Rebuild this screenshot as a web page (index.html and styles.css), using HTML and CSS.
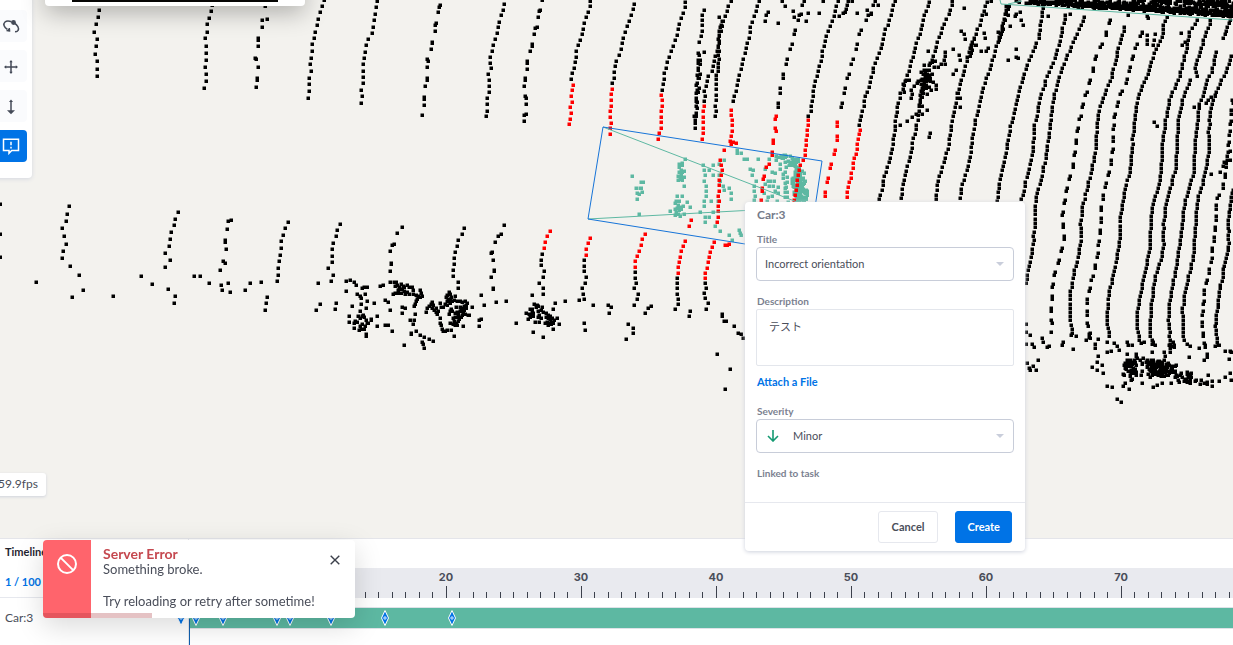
FILE: index.html
```html
<!DOCTYPE html>
<html lang="en">
<head>
<meta charset="utf-8">
<title>Point cloud review</title>
<link rel="stylesheet" href="styles.css">
</head>
<body class="app">
<main class="stage">
  <svg class="cloud" aria-hidden="true">
    <path id="cloud-black" class="cloud-black"/>
    <path id="cloud-teal" class="cloud-teal"/>
    <path id="cloud-red" class="cloud-red"/>
    <path class="edge-teal" d="M603 127L810 207M588 219L810 207M1000 0L1001 4L1240 20.500M1008 4L1022 1"/>
    <path class="edge-blue" d="M603 127L822 161L808 254L588 219Z"/>
  </svg>

  <nav class="tools" aria-label="Tools">
    <button class="tool" type="button" aria-label="Rotate"><svg class="tool-icon" viewBox="0 0 18 18"><path class="line" d="M5.500 12.500C2 10.500 .8 7 3 5c1.600-1.500 4-1.300 6.500-.3M12 6c3.500 2 5.500 5 4 7.500-.5.900-1.400 1.300-3 1.100M4.500 13.500l3 .3-.2-2.800"/><circle class="solid" cx="11.500" cy="5.500" r="2.400"/><circle class="solid" cx="7" cy="13" r="1.200"/></svg></button>
    <button class="tool" type="button" aria-label="Move"><svg class="tool-icon" viewBox="0 0 18 18"><path class="line" d="M9 4v12M3 10h12"/><path class="solid" d="M9 3l1.700 2.200H7.300zM9 17l1.700-2.200H7.300zM2 10l2.200-1.700v3.400zM16 10l-2.200-1.700v3.400z"/></svg></button>
    <button class="tool" type="button" aria-label="Move vertically"><svg class="tool-icon" viewBox="0 0 18 18"><path class="line" d="M9 4v10"/><path class="solid" d="M9 2.500l2 2.600H7zM9 17.300l-4-4h8z"/></svg></button>
    <button class="tool tool-active" type="button" aria-label="Add issue"><svg class="tool-icon" viewBox="0 0 18 18"><path class="line" d="M1.500 2.200h15v11.300H9.700L7 16.300v-2.800H1.500z"/><path class="line" d="M9 4.800v3.400M9 9.800v1.600"/></svg></button>
  </nav>

  <div class="camera"><div class="camera-image"></div></div>

  <output class="fps">59.9fps</output>

  <form class="issue">
    <div class="issue-body">
      <h2 class="issue-name">Car:3</h2>
      <label class="label" for="title">Title</label>
      <div class="pick">
        <select class="select" id="title"><option>Incorrect orientation</option></select>
        <span class="caret"></span>
      </div>
      <label class="label label-next" for="description">Description</label>
      <textarea class="description" id="description">テスト</textarea>
      <a class="attach" href="#attach">Attach a File</a>
      <label class="label label-next" for="severity">Severity</label>
      <div class="pick">
        <svg class="severity-icon" viewBox="0 0 12 12"><path d="M6 0v11M1 6l5 5 5-5"/></svg>
        <select class="select select-icon" id="severity"><option>Minor</option></select>
        <span class="caret"></span>
      </div>
      <p class="label label-next">Linked to task</p>
    </div>
    <div class="issue-actions">
      <button class="button button-plain" type="button">Cancel</button>
      <button class="button button-main" type="button">Create</button>
    </div>
  </form>
</main>

<section class="timeline">
  <div class="side">
    <h2 class="side-title">Timeline</h2>
    <p class="side-frame">1 / 100</p>
    <p class="side-object">Car:3</p>
  </div>
  <div class="lanes">
    <div class="ruler"><div id="labels" class="ruler-labels"></div><svg class="ruler-ticks" aria-hidden="true"><path id="ticks"/></svg></div>
    <div class="lane"><svg id="keys" class="keys" aria-hidden="true"></svg></div>
    <div class="cursor"></div>
  </div>
</section>

<aside class="toast" role="alert">
  <div class="toast-mark"><svg class="toast-icon" viewBox="0 0 20 20"><circle cx="10" cy="10" r="9"/><path d="M3.600 3.600l12.800 12.800"/></svg></div>
  <div class="toast-text">
    <h2 class="toast-title">Server Error</h2>
    <p>Something broke.</p>
    <p class="toast-hint">Try reloading or retry after sometime!</p>
  </div>
  <button class="toast-close" type="button" aria-label="Close"><svg class="toast-x" viewBox="0 0 10 10"><path d="M.7.7l8.600 8.600M9.300.7L.7 9.300"/></svg></button>
  <div class="toast-progress"></div>
</aside>
<script src="app.js"></script>
</body>
</html>
```
FILE: styles.css
```css
* { box-sizing: border-box; }
.app {
  margin: 0;
  height: 100vh;
  display: flex;
  flex-direction: column;
  overflow: hidden;
  background: #fff;
  color: #4a4e5a;
  font: 12px/16px Lato, "Noto Sans CJK JP", sans-serif;
}
h2, p { margin: 0; font-size: inherit; }
button, select, textarea { font: inherit; color: inherit; }

.stage { position: relative; flex: 1; min-height: 0; background: #f3f2ee; }
.cloud { position: absolute; inset: 0; width: 100%; height: 100%; }
.cloud-black { fill: #000; }
.cloud-red { fill: #f00; }
.cloud-teal { fill: #5db8a2; }
.edge-teal { fill: none; stroke: #5db8a2; }
.edge-blue { fill: none; stroke: #1674d8; }

.tools {
  position: absolute;
  top: -35px;
  left: -10px;
  display: flex;
  flex-direction: column;
  gap: 8px;
  padding: 45px 5px 16px;
  background: #fff;
  border-radius: 4px;
  box-shadow: 0 1px 4px #d4d7e0;
}
.tool {
  width: 32px;
  height: 32px;
  padding: 0;
  display: grid;
  place-items: center;
  border: 0;
  border-radius: 4px;
  background: #fafbfd;
  color: #444a57;
}
.tool-active { background: #0073e6; color: #fff; }
.tool-icon { width: 18px; height: 18px; }
.line { fill: none; stroke: currentColor; stroke-width: 1.5; }
.solid { fill: currentColor; }

.camera {
  position: absolute;
  top: -20px;
  left: 45px;
  width: 260px;
  padding: 0 27px 4px;
  background: #fff;
  border-radius: 4px;
  box-shadow: 0 6px 24px #0000004d;
}
.camera-image { height: 22px; background: #070605; }

.fps {
  position: absolute;
  left: -10px;
  bottom: 42px;
  padding: 3px 8px 4px;
  background: #fff;
  border-radius: 3px;
  box-shadow: 0 1px 3px #d0d3dc;
}

.issue {
  position: absolute;
  z-index: 2;
  top: 202px;
  left: 745px;
  width: 280px;
  background: #fff;
  border-radius: 4px;
  box-shadow: 0 1px 4px #cdd1dc;
}
.issue-body { display: flex; flex-direction: column; padding: 5px 11px 21px; }
.issue-name { margin-bottom: 9px; padding-left: 1px; color: #747b8a; font-weight: 700; }
.label { padding: 0 0 1px 1px; font-size: 10px; line-height: 14px; font-weight: 700; color: #7b8190; }
.label-next { margin-top: 13px; }
.pick { position: relative; display: flex; }
.select {
  flex: 1;
  height: 34px;
  padding: 0 8px;
  appearance: none;
  background: #fff;
  border: 1px solid #c8cdd9;
  border-radius: 4px;
  font-size: 11px;
}
.select-icon { padding-left: 36px; }
.caret {
  position: absolute;
  right: 10px;
  top: 15px;
  border: 4px solid transparent;
  border-top-color: #c9cedb;
  border-bottom: 0;
}
.severity-icon {
  position: absolute;
  top: 11px;
  left: 11px;
  width: 12px;
  height: 12px;
  fill: none;
  stroke: #159a72;
  stroke-width: 1.6;
}
.description {
  height: 57px;
  padding: 9px 12px;
  resize: none;
  border: 1px solid #e3e6ec;
  border-radius: 2px;
  font-size: 11px;
}
.attach { align-self: start; margin-top: 8px; padding: 0 0 1px 1px; color: #0073e6; font-size: 11px; font-weight: 700; text-decoration: none; }
.issue-actions {
  display: flex;
  justify-content: flex-end;
  gap: 17px;
  padding: 8px 13px;
  border-top: 1px solid #e6e8ee;
}
.button { height: 32px; padding: 0 13px; border: 1px solid #e6e8ee; border-radius: 3px; background: #fff; font-size: 11px; font-weight: 700; }
.button-main { padding: 0 11px; background: #0073e6; border-color: #0073e6; color: #fff; }

.timeline { display: flex; height: 107px; border-top: 1px solid #e4e5ea; }
.side { width: 189px; border-right: 1px solid #e6e8ee; font-weight: 700; font-size: 11px; }
.side-title { padding: 5px 5px 8px; color: #1f2430; }
.side-frame { padding: 6px 5px 7px; color: #0073e6; border-bottom: 1px solid #e6e8ee; }
.side-object { padding: 12px 5px; font-size: 12px; font-weight: 400; }
.lanes { position: relative; flex: 1; min-width: 0; padding-top: 29px; }
.ruler { position: relative; height: 30px; background: #e9eaef; overflow: hidden; }
.ruler-labels { color: #4a4e5a; font: 700 11px/18px Inter, sans-serif; }
.ruler-label { position: absolute; top: 0; width: 40px; margin-left: -20px; text-align: center; }
.ruler-ticks { position: absolute; inset: 0; width: 100%; height: 100%; stroke: #3c404b; }
.lane { margin-top: 9px; height: 22px; background: #5db8a2; border: solid #dfe2e8; border-width: 1px 0; }
.keys { display: block; margin-left: -20px; width: calc(100% + 20px); height: 20px; overflow: visible; }
.key-outer { fill: #0073e6; stroke: #fff; }
.key-inner { fill: none; stroke: #cfe6ff; }
.cursor { position: absolute; top: 80px; bottom: 0; left: 0; width: 1px; background: #0f5fae; }

.toast {
  position: fixed;
  z-index: 3;
  left: 43px;
  bottom: 27px;
  width: 312px;
  display: flex;
  background: #fff;
  border-radius: 4px;
  overflow: hidden;
  box-shadow: 0 8px 28px #00000026;
}
.toast-mark { width: 48px; padding-top: 14px; display: flex; justify-content: center; background: #ff646c; }
.toast-icon { width: 20px; height: 20px; fill: none; stroke: #fff; stroke-width: 2; }
.toast-text { flex: 1; padding: 6px 0 9px 12px; font-size: 13px; line-height: 16px; white-space: nowrap; }
.toast-title { line-height: 15px; font-size: 14px; color: #c5484f; }
.toast-hint { margin-top: 16px; }
.toast-close { position: absolute; top: 10px; right: 10px; width: 20px; height: 20px; display: grid; place-items: center; padding: 0; border: 0; background: none; }
.toast-x { width: 10px; height: 10px; stroke: #3c404b; stroke-width: 1.4; }
.toast-progress { position: absolute; left: 0; bottom: 0; width: 35%; height: 5px; background: #a9343a4d; }
```
FILE: app.js
```js
const marks = { black: [], red: [], teal: [] };

function dot(color, x, y) {
  marks[color].push("M" + (Math.round(x - 1.5) - .5) + " " + (Math.round(y - 1.5) - .5) + "h3.5v3.5h-3.5z");
}

let seed = 7;
function random() {
  seed = (seed * 16807) % 2147483647;
  return seed / 2147483647;
}

// Dots spaced evenly by y along a scan line; paired lines put two dots close together.
function scan(color, step, text, paired) {
  const pts = text.split(" ").map(p => p.split(",").map(Number));
  let y = pts[0][1];
  let index = 0;
  for (let i = 0; i < pts.length - 1; i++) {
    const [x0, y0] = pts[i];
    const [x1, y1] = pts[i + 1];
    while (y <= y1) {
      dot(color, x0 + (x1 - x0) * (y - y0) / (y1 - y0) + (random() - .5), y);
      y += paired ? (index % 2 ? step * 1.35 : step * .65) : step;
      index++;
    }
  }
}

// Single dots, in thirds of a pixel from an origin.
function dots(color, ox, oy, text) {
  text.trim().split(/\s+/).forEach(p => {
    const [x, y] = p.split(",").map(Number);
    dot(color, ox + x / 3, oy + y / 3);
  });
}

function cluster(color, cx, cy, rx, ry, count) {
  for (let i = 0; i < count; i++) {
    const a = random() * 6.283;
    const r = Math.sqrt(random());
    dot(color, cx + Math.cos(a) * rx * r, cy + Math.sin(a) * ry * r);
  }
}

// Upper scan lines
dots("black", 0, 0, "299,31 296,53 289,73 284,96 292,118 289,140 285,163 291,185 292,207 292,229 638,17 635,35 629,54 623,74 622,96 616,116 620,138 618,159 618,180 617,201 618,222 619,243 612,264 797,20 801,57 788,60 786,81 776,115 776,120 774,140 767,174 769,178 774,201 771,236 771,241 769,261");
dots("black", 300, 0, "73,2 67,18 60,38 56,57 52,76 46,96 42,115 38,134 36,155 34,174 32,194 33,214 28,234 28,254 29,274 24,294 231,3 228,23 227,42 222,62 219,81 216,100 204,118 200,137 197,156 194,174 191,194 191,213 190,232 189,251 184,270 187,290 183,309 420,17 419,21 414,38 408,71 407,75 405,93 398,126 396,130 393,148 383,179 384,184 381,202 381,236 381,241 377,259 374,292 374,297 374,315 367,346");
dots("black", 300, 0, "613,14 609,31 603,47 599,66 596,83 592,101 587,118 580,136 577,153 572,171 572,189 573,206 564,223 569,242 567,260 568,278 563,296 563,314 562,333 560,349 726,2 720,30 718,35 714,53 713,82 706,86 704,104 697,133 697,138 691,155 682,184 682,189 681,207 677,236 677,241 674,259 676,289 678,294 679,312 680,342 674,347 674,365");
scan("black", 5.6, "591,1 590,7 587,18 584,24 583,35 580,40 577,51 574,68 572,79 572,81");
scan("red", 5.7, "573,85 572,90 572,102 570,107 571,113 570,126");
scan("black", 5.7, "634,4 632,13 629,24 624,36 621,52 616,63 614,79 612,86");
scan("red", 5.7, "612,89 611,100 611,124 610,136");
scan("black", 5.5, "686,2 684,13 679,25 677,34 672,51 668,62 665,72 664,80 662,92");
scan("red", 5.5, "661,95 663,101 661,112 661,128 658,140");
dots("black", 560, 0, "432,30 426,45 428,62 427,77 426,94 424,110 419,127 432,156 479,51 487,65 484,76");
scan("black", 3.8, "699,53 698,75 697,90 697,110 695,131", true);
scan("black", 7, "701,60 700,70 699,90 695,115 697,125", true);
scan("black", 4, "721,27 719,40 719,60 717,78");
scan("black", 5.4, "717,79 716,90 716,118");
scan("black", 5, "731,1 729,5 727,12 724,20 720,35 716,55 713,70 709,75 706,85 704,102");
scan("red", 5.6, "704,106 703,117 704,128 702,138 701,144");
scan("black", 5.3, "760,1 756,12 751,27 748,44 744,58 740,73 736,89 733,106");
scan("red", 5.3, "732,110 732,130 731,140 730,146");
dots("red", 560, 0, "519,427 528,431 515,433 494,450");
scan("red", 5.2, "721,160 722,171 719,185 719,205 718,227");
scan("black", 7.3, "804,1 800,15 796,28 794,37 790,52 785,67 782,82 779,100 777,113", true);
scan("red", 6, "776,116 775,125 777,131 774,140 773,152 771,160 766,170 763,185 762,200", true);
scan("black", 5, "838,1 835,12 830,28 825,42 821,63 817,77 813,95 811,110 809,117");
scan("red", 5, "809,120 807,140 805,157 801,163 798,175 795,200");
scan("black", 7.3, "876,1 870,14 863,25 858,40 855,55 850,68 847,83 843,95 840,117", true);
scan("red", 7, "838,122 837,140 835,152 831,166 827,185 825,201", true);
scan("black", 4.8, "895,1 891,17 885,32 881,50 875,65 871,80 866,98 862,115 860,128");
scan("red", 4.8, "860,130 858,146 853,168 848,190 847,201");
scan("black", 4.6, "929,2 925,15 920,35 915,50 910,70 904,85 898,105 896,120 895,133 892,152 888,168 883,184 880,202");
scan("black", 4.6, "953,1 949,14 942,32 937,45 933,60 928,68 925,80 921,100 918,118 915,135 911,155 907,170 903,190 902,202");
scan("black", 4.6, "987,2 985,10 981,22 975,38 970,52 966,65 962,80 958,95 955,110 952,125 949,145 945,160 940,175 938,185 936,202");
scan("black", 4.6, "1006,10 1003,25 999,40 993,60 988,75 983,90 980,105 975,125 972,145 969,165 964,180 960,202");
scan("black", 4.4, "1043,8 1041,25 1040,38 1034,50 1028,65 1023,80 1019,95 1015,110 1010,130 1007,150 1002,172 997,202");
scan("black", 4.4, "1066,15 1061,38 1057,55 1050,70 1045,85 1041,95 1038,115 1034,130 1033,155 1028,175 1023,195 1022,202");
scan("black", 4.3, "1085,17 1075,40 1066,60 1060,75 1055,92 1052,115 1049,140 1046,160 1041,180 1036,200 1035,230 1033,250 1028,275 1026,286");
scan("black", 6, "1110,20 1105,40 1097,55 1092,75 1086,95 1081,115 1078,130 1076,150 1073,170 1068,185 1064,207 1063,215 1064,240 1061,255 1055,275 1053,290 1052,315 1052,334", true);
scan("black", 4.2, "1125,27 1120,45 1115,65 1111,80 1105,95 1099,110 1097,130 1096,150 1092,172 1086,195 1082,210 1081,225 1082,240 1079,255 1073,280 1070,300 1071,320 1073,336");
scan("black", 5.8, "1142,33 1136,48 1131,65 1128,80 1121,95 1116,110 1114,125 1113,150 1110,172 1104,195 1102,208 1100,235 1098,255 1091,285 1088,300 1087,320 1090,340", true);
scan("black", 4.1, "1167,17 1163,28 1163,36 1156,50 1148,75 1140,95 1136,110 1133,140 1132,165 1127,185 1123,200 1121,215 1120,240 1116,265 1110,290 1107,315 1110,340");
scan("black", 4, "1198,20 1190,32 1187,48 1183,65 1178,82 1170,98 1166,120 1163,145 1162,170 1158,190 1154,200 1151,220 1150,250 1145,275 1139,300 1137,325 1140,343");
scan("black", 4, "1211,20 1205,38 1201,50 1196,65 1197,78 1191,80 1183,100 1179,120 1178,140 1176,170 1170,190 1166,205 1164,225 1164,250 1156,275 1152,300 1150,330 1153,345");
scan("black", 4, "1216,52 1213,70 1206,85 1200,105 1197,125 1195,150 1194,175 1187,195 1184,210 1181,240 1177,265 1172,290 1169,315 1171,355");
scan("black", 4, "1232,56 1225,75 1217,90 1211,110 1209,135 1209,155 1204,180 1198,200 1196,220 1194,255 1187,285 1183,310 1184,340");
scan("black", 3.7, "1231,20 1223,40");
scan("black", 5.3, "1233,100 1230,130 1229,150 1226,170 1223,190 1217,200 1215,235 1211,265 1205,290 1202,320 1205,345 1208,358", true);
scan("black", 3.8, "1233,190 1229,220 1229,245 1224,270 1220,290 1217,315 1216,330 1219,348");

// Loose returns between the scan lines
dots("black", 820, 0, "75,38 82,15 84,5 57,49 69,40 78,28 112,39 142,30 153,44 155,39 174,16 98,4 434,25 515,3 498,44 325,154 377,156 400,148 375,169 372,181 375,192 364,193 355,203 343,202 347,185 338,188 330,190 312,197 417,167 422,181 409,212 400,223 425,93 433,103 437,118 492,101 497,114 505,145 483,153 498,153 527,155 590,147 590,172 595,174 566,181 413,281 422,295 420,321 328,412 332,401 242,375 263,365 277,352 322,332 308,344 308,318 298,317 290,343 323,284 335,272 350,268 350,255 339,246 275,296 276,284 275,270 254,277 267,240 257,245 253,257 572,79 585,48 590,44 602,38 605,61 609,75 684,49 752,42 924,45 982,50 984,55 967,98 981,105 982,121 983,133 1007,103 1002,121 1000,136 1085,101 1097,127 1088,135 1106,120 1003,367 1011,379 1124,321 1137,322 1160,310 1165,302 1174,292 1187,285 1175,523 1201,517 1211,500 1214,488 1222,480 1232,482 1232,454");
dots("black", 820, 0, "462,118 458,128 455,137 467,135 470,136 450,146 457,150 448,156 455,161 450,170 548,80 550,88 547,95 540,100 535,98 545,103 541,112 538,120 560,20 564,28 558,40 565,46 555,60 568,18 312,210 328,212 322,222 316,229 325,232 332,236 308,238 318,243 326,228 311,224 296,245 303,240 292,250 284,260 305,254 318,257 311,267 320,266 328,261 303,273 311,280 302,285 308,292 300,300 336,222 330,245");
cluster("black", 925, 80, 8, 10, 10);
dots("black", 560, 0, "618,46 626,36 616,63 656,71 677,20 668,4 701,35 702,51 724,44 745,40 740,64 777,40 790,3");

// Wall of returns at the top right
for (let i = 0; i < 360; i++) {
  const x = 1004 + 232 * Math.sqrt(random());
  dot("black", x, random() * ((x - 1000) * .065 + 2));
}
for (let x = 1030; x < 1236; x += 2) {
  dot("black", x, (x - 1000) * .066 - 1 + random() * 3);
  dot("black", x, (x - 1000) * .057 - 2 + random() * 3);
}

// Left ground returns
dots("black", 0, 200, "1,12 0,102 0,171 207,20 203,42 198,65 188,86 194,109 198,132 189,154 188,176 211,200 238,227 249,271 218,293 108,246 341,288 423,230 457,252 535,36 525,57 522,76 514,97 512,118 508,139 496,160 510,182 496,203 504,269 526,290 524,311 694,60 686,65 682,87 675,122 676,127 679,148 670,184 675,189 662,210 584,228 601,228 628,249 664,257 685,250 667,270 690,278 736,271 750,251 785,246 864,66 855,86 851,105 843,125 843,145 842,166 838,185 836,206 836,226 831,245 801,291 798,311 795,331");
dots("black", 310, 200, "91,72 82,91 78,110 71,129 66,149 68,168 66,187 55,206 70,225 64,244 26,251 32,313 18,332 276,82 262,100 253,133 248,137 241,155 245,190 244,194 241,213 464,86 456,104 445,121 441,139 435,157 433,175 434,193 431,212 430,229 444,248 446,266 437,288 582,76 574,104 564,109 557,127 548,157 545,161 550,180 554,210 554,215 545,233 551,265 551,269 513,285 522,316 559,307 589,305 514,358 509,361 508,378 618,370 109,245 121,241 133,248 138,256 109,273 80,309 75,327 126,320 119,350 119,367 142,284 152,289 153,295 157,265 164,263 172,261 166,282 171,303 192,309 170,326 153,312 152,335 159,345 201,350 185,358 203,380 226,376 235,376 248,394 170,403 170,409 212,260 220,255 240,248 227,302 235,307 242,331 277,323 287,325 277,339 315,342 313,361 302,361 309,374 320,394 304,403 305,400 330,407 342,412 357,417 369,424 337,428 340,433 342,444 283,437 459,380 433,410 478,345 486,321 424,391");
dots("black", 310, 200, "146,350 152,354 158,348 164,352 137,364 134,371 134,384 142,367 148,390 155,388 163,387 168,362 172,370 156,372 150,378 165,378 176,369 184,362 254,248 260,247 263,255 257,259 268,261 274,254 279,258 271,268 266,271 277,267 284,263 291,257 299,261 308,263 309,270 282,274 291,278 275,279 264,280 256,279 250,282 286,283 297,282 309,282 330,272 335,279 338,289 330,291 324,288 318,286 323,298 318,305 315,313 312,320 348,338 351,324 357,320 364,313 367,308 370,317 366,324 374,331 379,337 382,343 386,333 380,325 392,310 395,323 392,356 390,370 393,377 397,388 401,394 407,394 411,392");
dots("black", 310, 200, "417,278 412,285 409,291 422,284 424,292 414,297 421,300 411,305 405,314 400,321 413,315 420,311 427,305 433,302 441,304 450,303 456,308 466,303 473,309 470,315 463,319 459,325 454,330 450,335 446,342 441,338 435,341 428,335 425,327 421,333 417,342 439,323 450,322 468,325 464,332 460,339 467,343 474,345 458,347 454,353 449,359 444,364 439,369 433,364 430,373 422,370 435,376 441,375 430,356 437,352 444,351");
dots("black", 310, 200, "697,162 695,180 695,197 703,214 700,231 687,249 699,266 700,283 666,287 735,310 729,327 766,305 808,300 824,299 849,316 670,397 699,413 730,389 748,373 822,181 822,198 822,215 830,232 825,249 816,266 819,282 824,370 826,391 895,317 904,322 897,339 956,374 970,384 970,400 949,418 975,217 975,234 978,250 974,266 985,282 981,299 974,315 1006,341 1016,324 1025,318 1103,235 1103,251 1103,266 1103,282 1106,298 1105,314 1097,329 1142,335 1137,350 1186,249 1190,265 1184,281 1186,296 1195,311 1189,327 1237,342 1236,349 1242,365 1248,365 1273,380 1286,400 1293,404 1299,414 1221,464 1262,507 1245,569");
dots("black", 310, 200, "674,313 682,317 678,323 686,320 697,321 668,327 661,329 667,335 648,340 657,343 664,344 671,341 660,352 655,357 670,350 685,334 693,331 687,345 684,352 676,367 688,368 694,354 699,338 710,340 716,346 722,350 708,352 714,356 720,359 728,355 734,362 741,356 725,366 718,369 711,366 706,369 716,375 724,374 731,369");

// Lower right returns
dots("black", 1020, 200, "18,374 18,398 18,432 32,405 37,434 43,443 56,482 22,489 40,500 28,506 32,512 49,510 67,416 70,427 81,442 89,440 127,437 131,426 161,448 155,406 169,410 200,421 209,413 211,400 235,418 225,432 225,445 234,468 233,488 247,497 217,501 232,510 250,520 263,426 284,431 292,440 263,456 275,454 298,452 321,427 326,437 338,437 323,463 363,430 374,428 399,427 407,436 397,456 432,456 436,468 502,434 510,440 509,473 539,445 552,480 563,466 557,435 586,440 597,437 617,453 632,453 629,478 635,456 261,559 278,563 329,567 292,599 305,608 309,560 317,550 366,550 399,563 412,556 428,550 455,550 478,547 503,548 525,544 540,552 563,553 576,559 577,544 598,543 617,533 630,520 635,540 565,527 515,520 348,463 349,470 353,476 344,482 330,480 336,489");
cluster("black", 1130, 371, 7, 11, 34);
cluster("black", 1146, 368, 16, 10, 44);
cluster("black", 1163, 369, 15, 9, 84);
cluster("black", 1184, 377, 9, 5, 16);
cluster("black", 1198, 382, 10, 3, 8);
cluster("black", 1172, 347, 3, 5, 8);

// Red returns below the vehicle box
dots("red", 310, 200, "721,94 712,110 706,127 703,145 842,116 836,131 829,148 828,165 1006,104 998,119 993,136 988,153 981,169 976,185 975,201 1125,125 1119,140 1115,155 1112,171 1107,187 1106,203 1104,219 1143,62 1138,78 1214,126 1208,142 1202,157 1198,173 1195,188 1191,204 1187,219 1185,234 1245,135 1252,136 1258,132");

// Vehicle returns
dots("teal", 560, 0, "218,528 243,546 250,547 240,564 244,564 230,566 231,579 247,576 238,582 231,599 239,644 377,478 358,492 367,490 373,559 368,588 383,606 390,622 348,603 352,589 357,605 354,617 346,629 331,635 365,629 374,642 362,649 346,645 429,495 433,511 437,527 434,543 438,558 438,573 438,588 434,604 434,618 421,636 437,651 436,666 459,496 478,494 449,512 460,526 478,526 492,480 482,543 491,558 494,572 507,566 515,581 513,597 455,605 475,605 461,637 447,651 465,680 480,694 508,705 517,721 538,691 541,699 544,706 531,452 533,461 543,461 554,478 563,479 571,508 579,512 577,526 595,479 588,545 582,558 583,575 586,588 582,602 617,508 628,478 625,545 617,552 630,545 628,559 614,580 621,604 624,591 645,519 638,518 643,544 641,559 646,575 638,590 655,563 654,580 652,605");
dots("teal", 560, 0, "366,496 359,503 364,510 358,517 366,518 374,514 363,524 356,530 365,531 354,541 360,539 367,541 372,531 346,609 352,624 358,630 350,637 362,621 355,642 370,620");
scan("teal", 4.7, "777,160 780,165 783,175 786,188 785,202");
scan("teal", 5, "785,157 786,165 787,180 788,202");
cluster("teal", 783, 158, 8, 3, 14);
cluster("teal", 794, 163, 6, 6, 22);
cluster("teal", 799, 180, 7, 12, 66);
cluster("teal", 801, 195, 7, 9, 56);

for (const color in marks) {
  document.getElementById("cloud-" + color).setAttribute("d", marks[color].join(""));
}

// Ruler: ten frames take 135 pixels; only labels that fit in the ruler are added.
const rulerWidth = document.querySelector(".ruler").clientWidth;
const frameX = frame => Math.round((frame - 1) * 13.5);
let ticks = "";
for (let frame = 1; frame <= 100; frame++) {
  const x = frameX(frame) + .5;
  ticks += "M" + x + " " + (frame % 10 ? 24 : 18) + "V30";
  if (frame % 10 === 0 && x + 20 < rulerWidth) {
    const label = document.createElement("span");
    label.className = "ruler-label";
    label.style.left = frameX(frame) + "px";
    label.textContent = frame;
    document.getElementById("labels").append(label);
  }
}
document.getElementById("ticks").setAttribute("d", ticks);

document.getElementById("keys").innerHTML = [12, 27, 54, 108, 121, 162, 216, 283].map(x =>
  `<path class="key-outer" d="M${x} 2.500l3.500 7.500l-3.500 7.500l-3.500-7.500z"/><path class="key-inner" d="M${x - 1} 9h2v2h-2z"/>`
).join("");
```
